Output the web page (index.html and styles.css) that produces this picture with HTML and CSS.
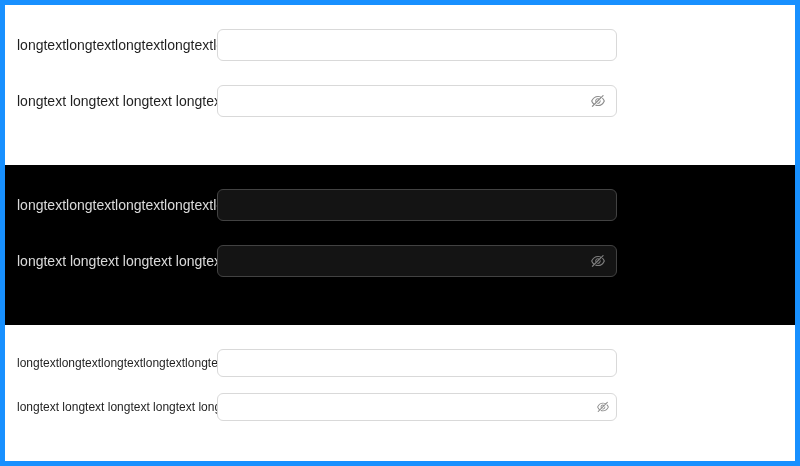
FILE: index.html
```html
<!DOCTYPE html>
<html lang="en">
<head>
<meta charset="utf-8">
<title>Form</title>
<link rel="stylesheet" href="styles.css">
</head>
<body>
<svg width="0" height="0" class="defs"><symbol id="eye-off" viewBox="64 64 896 896"><path d="M942.2 486.2Q889.47 375.11 816.7 305l-50.88 50.88C807.31 395.53 843.45 447.4 874.7 512 791.5 684.2 673.4 766 512 766q-72.67 0-133.87-22.38L323 798.75Q408 838 512 838q288.3 0 430.2-300.3a60.29 60.29 0 000-51.5zm-63.57-320.64L836 122.88a8 8 0 00-11.32 0L715.31 232.2Q624.86 186 512 186q-288.3 0-430.2 300.3a60.3 60.3 0 000 51.5q56.69 119.4 136.5 191.41L112.48 835a8 8 0 000 11.31L155.17 889a8 8 0 0011.31 0l712.15-712.12a8 8 0 000-11.32zM149.3 512C232.6 339.8 350.7 258 512 258c54.54 0 104.13 9.36 149.12 28.39l-70.3 70.3a176 176 0 00-238.13 238.13l-83.42 83.42C223.1 637.49 183.3 582.28 149.3 512zm246.7 0a112.11 112.11 0 01146.2-106.69L401.31 546.2A112 112 0 01396 512z"/><path d="M508 624c-3.46 0-6.87-.16-10.25-.47l-52.82 52.82a176.09 176.09 0 00227.42-227.42l-52.82 52.82c.31 3.38.47 6.79.47 10.25a111.94 111.94 0 01-112 112z"/></symbol></svg>
<main class="frame">
  <form class="form">
    <div class="row"><div class="label">longtextlongtextlongtextlongtextlongtext</div><div class="input"></div></div>
    <div class="row"><div class="label">longtext longtext longtext longtext longtext</div><div class="input"><svg class="icon"><use href="#eye-off"/></svg></div></div>
  </form>
  <form class="form dark">
    <div class="row"><div class="label">longtextlongtextlongtextlongtextlongtext</div><div class="input"></div></div>
    <div class="row"><div class="label">longtext longtext longtext longtext longtext</div><div class="input"><svg class="icon"><use href="#eye-off"/></svg></div></div>
  </form>
  <form class="form compact">
    <div class="row"><div class="label">longtextlongtextlongtextlongtextlongtext</div><div class="input"></div></div>
    <div class="row"><div class="label">longtext longtext longtext longtext longtext</div><div class="input"><svg class="icon"><use href="#eye-off"/></svg></div></div>
  </form>
</main>
</body>
</html>
```
FILE: styles.css
```css
* { box-sizing: border-box; }
body { margin: 0; font-family: "Liberation Sans", sans-serif; }
.defs { display: none; }
.frame { height: 466px; border: 5px solid #1890ff; background: #fff; }
.form {
  height: 160px;
  padding: 24px 12px;
  display: flex;
  flex-direction: column;
  gap: 24px;
  font-size: 14px;
  color: rgba(0, 0, 0, 0.88);
  background: #fff;
}
.row { display: grid; grid-template-columns: 200px 400px; height: 32px; }
.label { line-height: 32px; white-space: nowrap; overflow: hidden; will-change: transform; }
.input {
  display: flex;
  align-items: center;
  justify-content: flex-end;
  padding: 0 11px;
  border: 1px solid #d9d9d9;
  border-radius: 6px;
  background: #fff;
}
.icon { width: 14px; height: 14px; fill: rgba(0, 0, 0, 0.45); }
.dark { background: #000; color: rgba(255, 255, 255, 0.85); }
.dark .input { background: #141414; border-color: #424242; }
.dark .icon { fill: rgba(255, 255, 255, 0.45); }
.compact { height: 136px; gap: 16px; font-size: 12px; }
.compact .row { height: 28px; }
.compact .label { line-height: 28px; }
.compact .input { padding: 0 7px; }
.compact .icon { width: 12px; height: 12px; }
```
